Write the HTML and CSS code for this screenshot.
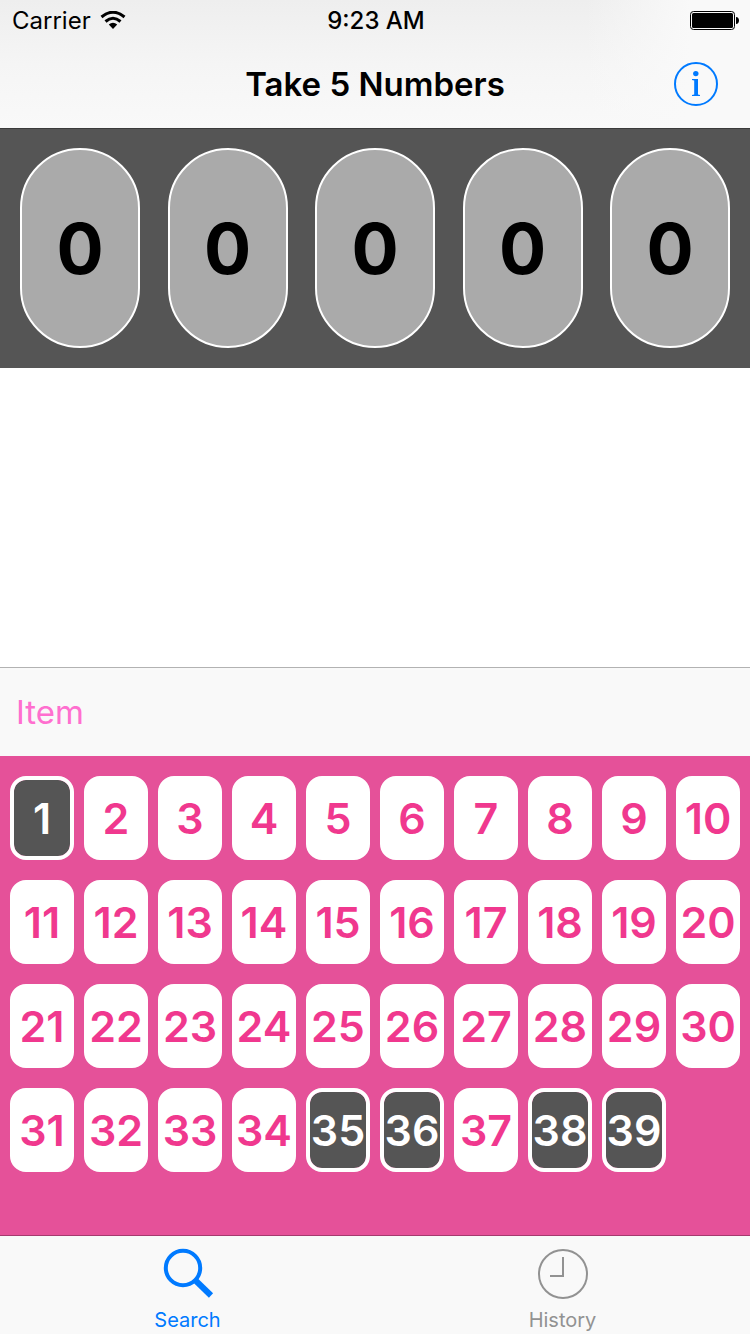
FILE: index.html
```html
<!DOCTYPE html>
<html lang="en">
<head>
<meta charset="utf-8">
<meta name="viewport" content="width=device-width, initial-scale=1">
<title>Take 5 Numbers</title>
<link rel="stylesheet" href="styles.css">
</head>
<body>
<div class="app">
  <header class="header">
    <div class="status">
      <div class="carrier">
        <span>Carrier</span>
        <svg class="wifi" width="26" height="20" viewBox="0 0 26 20" aria-hidden="true">
          <path d="M1.500 6Q13-3.600 24.500 6" fill="none" stroke="#000" stroke-width="3"/>
          <path d="M5.500 10.500Q13 4 20.500 10.500" fill="none" stroke="#000" stroke-width="3"/>
          <path d="M8.800 13.600Q13 10 17.200 13.600L13 18Z"/>
        </svg>
      </div>
      <div class="clock">9:23 AM</div>
      <svg class="battery" width="50" height="20" viewBox="0 0 50 20" role="img" aria-label="Battery full">
        <rect x="0.500" y="0.500" width="44" height="18" rx="3" fill="none" stroke="#000"/>
        <rect x="2" y="2" width="41" height="15" rx="1.500"/>
        <path d="M46 6c4 0 4 7 0 7z"/>
      </svg>
    </div>
    <div class="navbar">
      <h1 class="title">Take 5 Numbers</h1>
      <button class="info" type="button" aria-label="Information">
        <svg width="44" height="44" viewBox="0 0 44 44" aria-hidden="true">
          <circle cx="22" cy="22" r="21" fill="none" stroke="currentColor" stroke-width="2"/>
          <circle cx="21.800" cy="11.600" r="2.700" fill="currentColor"/>
          <path d="M18 17H24V32.600L26 33V34H18V33L20.200 32.600V18.400L18 18Z" fill="currentColor"/>
        </svg>
      </button>
    </div>
  </header>

  <section class="draw" aria-label="Chosen numbers">
    <div class="ball">0</div>
    <div class="ball">0</div>
    <div class="ball">0</div>
    <div class="ball">0</div>
    <div class="ball">0</div>
  </section>

  <main class="content"></main>

  <div class="toolbar">
    <button class="toolbar-item" type="button">Item</button>
  </div>

  <section class="pad" aria-label="Number pad">
    <button class="num" type="button" aria-pressed="true">1</button>
    <button class="num" type="button" aria-pressed="false">2</button>
    <button class="num" type="button" aria-pressed="false">3</button>
    <button class="num" type="button" aria-pressed="false">4</button>
    <button class="num" type="button" aria-pressed="false">5</button>
    <button class="num" type="button" aria-pressed="false">6</button>
    <button class="num" type="button" aria-pressed="false">7</button>
    <button class="num" type="button" aria-pressed="false">8</button>
    <button class="num" type="button" aria-pressed="false">9</button>
    <button class="num" type="button" aria-pressed="false">10</button>
    <button class="num" type="button" aria-pressed="false">11</button>
    <button class="num" type="button" aria-pressed="false">12</button>
    <button class="num" type="button" aria-pressed="false">13</button>
    <button class="num" type="button" aria-pressed="false">14</button>
    <button class="num" type="button" aria-pressed="false">15</button>
    <button class="num" type="button" aria-pressed="false">16</button>
    <button class="num" type="button" aria-pressed="false">17</button>
    <button class="num" type="button" aria-pressed="false">18</button>
    <button class="num" type="button" aria-pressed="false">19</button>
    <button class="num" type="button" aria-pressed="false">20</button>
    <button class="num" type="button" aria-pressed="false">21</button>
    <button class="num" type="button" aria-pressed="false">22</button>
    <button class="num" type="button" aria-pressed="false">23</button>
    <button class="num" type="button" aria-pressed="false">24</button>
    <button class="num" type="button" aria-pressed="false">25</button>
    <button class="num" type="button" aria-pressed="false">26</button>
    <button class="num" type="button" aria-pressed="false">27</button>
    <button class="num" type="button" aria-pressed="false">28</button>
    <button class="num" type="button" aria-pressed="false">29</button>
    <button class="num" type="button" aria-pressed="false">30</button>
    <button class="num" type="button" aria-pressed="false">31</button>
    <button class="num" type="button" aria-pressed="false">32</button>
    <button class="num" type="button" aria-pressed="false">33</button>
    <button class="num" type="button" aria-pressed="false">34</button>
    <button class="num" type="button" aria-pressed="true">35</button>
    <button class="num" type="button" aria-pressed="true">36</button>
    <button class="num" type="button" aria-pressed="false">37</button>
    <button class="num" type="button" aria-pressed="true">38</button>
    <button class="num" type="button" aria-pressed="true">39</button>
  </section>

  <nav class="tabs">
    <button class="tab tab-active" type="button" aria-current="page">
      <svg width="52" height="52" viewBox="0 0 52 52" aria-hidden="true">
        <circle cx="21" cy="21" r="17.200" fill="none" stroke="currentColor" stroke-width="4"/>
        <path d="M32.500 32.500L49 48.500" stroke="currentColor" stroke-width="6"/>
      </svg>
      <span>Search</span>
    </button>
    <button class="tab" type="button">
      <svg width="52" height="52" viewBox="0 0 52 52" aria-hidden="true">
        <circle cx="26" cy="27" r="24" fill="none" stroke="currentColor" stroke-width="2"/>
        <path d="M26 10V29H13" fill="none" stroke="currentColor" stroke-width="2"/>
      </svg>
      <span>History</span>
    </button>
  </nav>
</div>
</body>
</html>
```

FILE: styles.css
```css
* {
  box-sizing: border-box;
}

body {
  margin: 0;
  background: #fff;
  color: #000;
  font-family: Inter, "Liberation Sans", sans-serif;
}

button {
  margin: 0;
  padding: 0;
  border: 0;
  background: none;
  font: inherit;
  cursor: pointer;
}

svg {
  display: block;
}

.app {
  display: flex;
  flex-direction: column;
  min-height: 100vh;
}

.header {
  background:
    linear-gradient(to right, rgba(249, 249, 249, 0) 78%, #f9f9f9 92%),
    linear-gradient(#eeeeee, #f5f5f5 50%, #f9f9f9);
}

.status {
  display: grid;
  grid-template-columns: 1fr auto 1fr;
  align-items: center;
  height: 40px;
  padding: 2px 10px 0 12px;
  font-size: 24px;
  line-height: 38px;
}

.carrier {
  display: flex;
  align-items: center;
  gap: 9px;
}

.clock {
  font-weight: 500;
}

.battery {
  justify-self: end;
}

.navbar {
  display: grid;
  grid-template-columns: 1fr auto 1fr;
  align-items: center;
  height: 88px;
  padding: 0 32px;
}

.title {
  grid-column: 2;
  margin: 0;
  font-size: 33px;
  font-weight: 600;
  line-height: 40px;
}

.info {
  justify-self: end;
  color: #007aff;
}

.draw {
  display: flex;
  justify-content: space-between;
  padding: 19px 20px 20px;
  border-top: 1px solid #3b3b3b;
  background: #555;
}

.ball {
  width: 120px;
  height: 200px;
  border: 2px solid #fff;
  border-radius: 60px;
  background: #aaa;
  font-size: 70px;
  font-weight: 700;
  line-height: 198px;
  text-align: center;
}

.content {
  flex: 1;
}

.toolbar {
  display: flex;
  align-items: center;
  height: 89px;
  padding: 0 16px;
  border-top: 1px solid #b2b2b2;
  background: #f9f9f9;
}

.toolbar-item {
  color: #ff6fcf;
  font-size: 33px;
  font-weight: 400;
  line-height: 40px;
}

.pad {
  display: grid;
  grid-template-columns: repeat(10, minmax(0, 1fr));
  gap: 20px 10px;
  padding: 20px 10px 63px;
  background: #e55199;
}

.num {
  display: flex;
  align-items: center;
  justify-content: center;
  height: 84px;
  border: 4px solid #fff;
  border-radius: 16px;
  background: #fff;
  color: #f0388e;
  font-size: 43px;
  font-weight: 600;
  line-height: 48px;
}

.num[aria-pressed="true"] {
  background: #555;
  background-clip: padding-box;
  color: #fff;
}

.tabs {
  display: grid;
  grid-template-columns: 1fr 1fr;
  height: 99px;
  border-top: 1px solid #a43a6e;
  background: #f9f9f9;
}

.tab {
  display: flex;
  flex-direction: column;
  align-items: center;
  justify-content: flex-end;
  gap: 7px;
  color: #929292;
  font-size: 20px;
  line-height: 28px;
}

.tab-active {
  color: #007aff;
}
```
